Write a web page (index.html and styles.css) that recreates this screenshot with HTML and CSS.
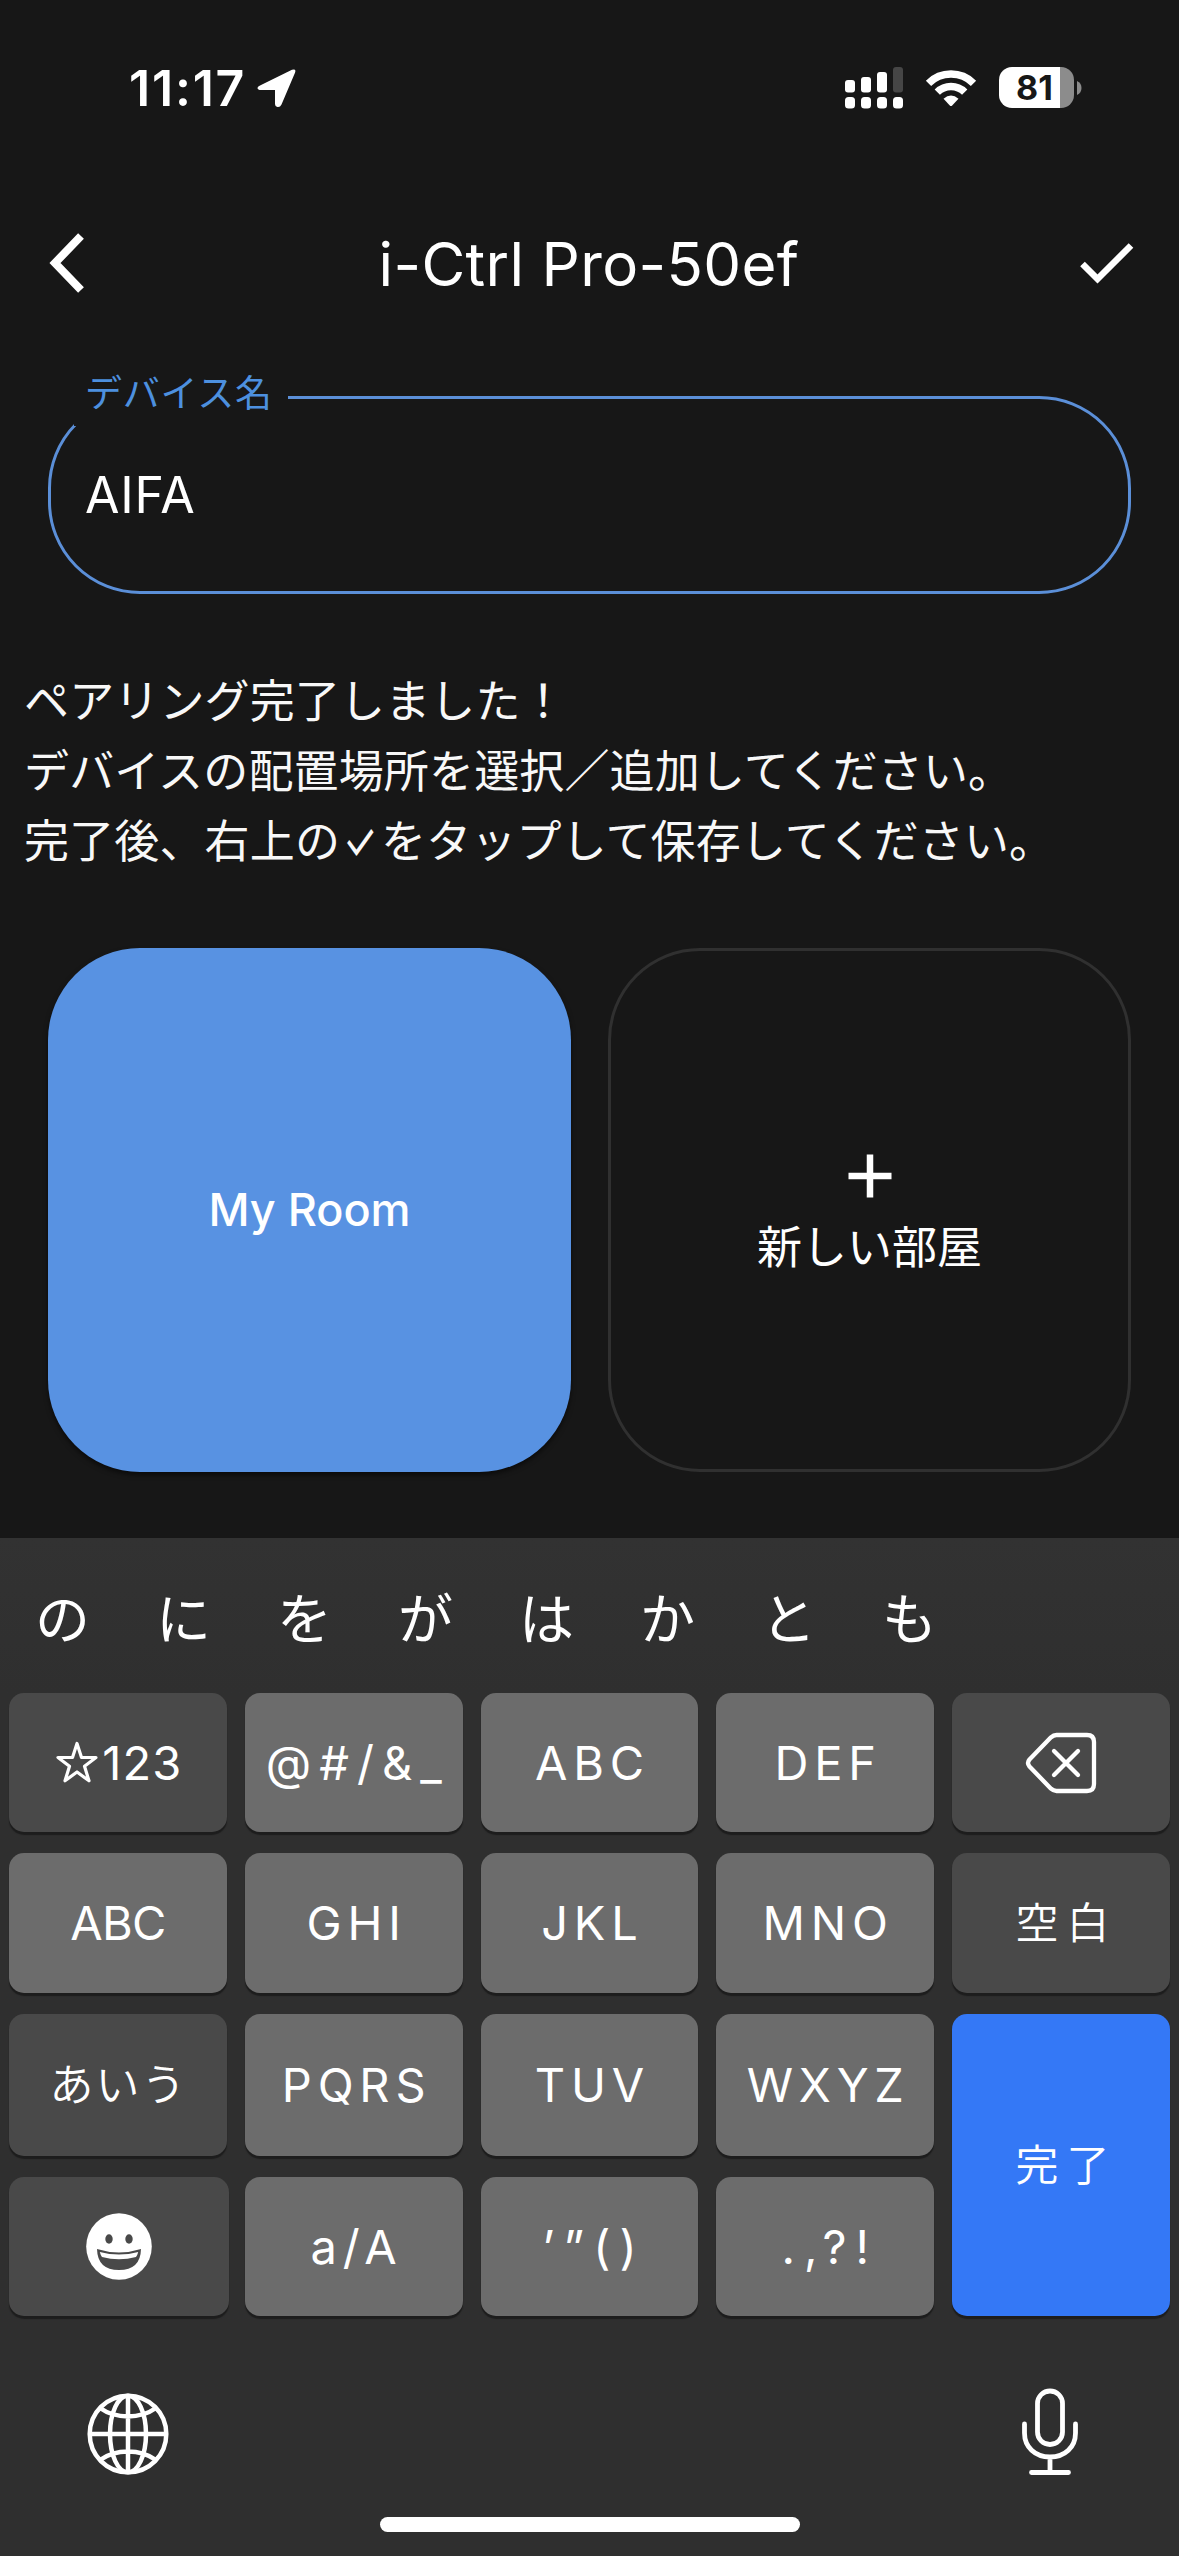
FILE: index.html
```html
<!DOCTYPE html>
<html lang="ja">
<head>
<meta charset="utf-8">
<title>i-Ctrl Pro-50ef</title>
<link rel="stylesheet" href="styles.css">
</head>
<body>
<div class="screen">
  <div class="status">
    <div class="status-left">
      <span class="time">11:17</span>
      <svg class="location" width="40" height="40" viewBox="0 0 40 40"><path d="M3 17.500 L35 1.800 Q39.500 .2 38 4.800 L24.500 36.500 Q23 39.500 20.500 39 Q18 38.500 18 35.500 V22 H4 Q.8 22 .5 20 Q.4 18.700 3 17.500Z" fill="#fff"/></svg>
    </div>
    <div class="status-right">
      <svg width="58" height="42" viewBox="0 0 58 42" fill="#fff">
        <rect x="0" y="13" width="10" height="12.500" rx="3"/><rect x="16" y="10" width="10" height="15.500" rx="3"/><rect x="32" y="5" width="10" height="20.500" rx="3"/><rect x="48" y="0" width="10" height="25.500" rx="3" fill="#464646"/>
        <rect x="0" y="30" width="10" height="11.500" rx="3.500"/><rect x="16" y="30" width="10" height="11.500" rx="3.500"/><rect x="32" y="30" width="10" height="11.500" rx="3.500"/><rect x="48" y="30" width="10" height="11.500" rx="3.500"/>
      </svg>
      <svg class="wifi" width="52" height="38" viewBox="0 0 52 38" fill="none" stroke="#fff" stroke-width="7.500">
        <path d="M3.500 14.300 A32 32 0 0 1 48.500 14.300"/><path d="M12.300 23.200 A19.500 19.500 0 0 1 39.700 23.200"/><path d="M18.500 29.700 Q26 23.400 33.500 29.700 L27.200 36.500 Q26 37.700 24.800 36.500Z" fill="#fff" stroke="none"/>
      </svg>
      <div class="battery"><div class="battery-body">81</div><svg width="5" height="14" viewBox="0 0 5 14"><path d="M0 0 Q4.500 2 4.500 7 Q4.500 12 0 14Z" fill="#8c8c8c"/></svg></div>
    </div>
  </div>

  <header class="header">
    <svg width="36" height="62" viewBox="0 0 36 62"><path d="M32 4 L6 31 L32 58" fill="none" stroke="#fff" stroke-width="8"/></svg>
    <h1 class="title">i-Ctrl Pro-50ef</h1>
    <svg width="54" height="42" viewBox="0 0 54 42"><path d="M2.500 22 L17.500 37 L51 3.500" fill="none" stroke="#fff" stroke-width="6.500"/></svg>
  </header>

  <main class="content">
    <div class="field">
      <span class="field-label">デバイス名</span>
      <span class="field-value">AIFA</span>
    </div>
    <p class="message">ペアリング完了しました！<br>デバイスの配置場所を選択／追加してください。<br>完了後、右上の<span class="tick">✓</span>をタップして保存してください。</p>
    <div class="rooms">
      <div class="room room-selected">My Room</div>
      <div class="room room-new">
        <svg width="44" height="44" viewBox="0 0 44 44"><path d="M22 .5 V43.500 M.5 22 H43.500" stroke="#fff" stroke-width="6.500"/></svg>
        <span>新しい部屋</span>
      </div>
    </div>
  </main>

  <section class="keyboard">
    <div class="candidates"><span>の</span><span>に</span><span>を</span><span>が</span><span>は</span><span>か</span><span>と</span><span>も</span></div>
    <div class="keys">
      <div class="key dark"><svg class="star" width="44" height="44" viewBox="0 0 44 44"><path d="M22 2.500 L26.500 16.500 H41 L29.500 25.300 L34 39.800 L22 31 L10 39.800 L14.500 25.300 L3 16.500 H17.500Z" fill="none" stroke="#fff" stroke-width="3.200" stroke-linejoin="round"/></svg><span class="digits">123</span></div>
      <div class="key"><span class="spaced symbols">@#/&amp;_</span></div>
      <div class="key"><span class="spaced">ABC</span></div>
      <div class="key"><span class="spaced">DEF</span></div>
      <div class="key dark"><svg class="delete" width="72" height="62" viewBox="0 0 72 62" fill="none" stroke="#fff" stroke-width="4.300" stroke-linecap="round" stroke-linejoin="round"><path d="M31.500 3 H62 Q69 3 69 10 V52 Q69 59 62 59 H31.500 Q28.500 59 26 56.700 L4.500 34.500 Q1.500 31 4.500 27.500 L26 5.300 Q28.500 3 31.500 3Z"/><path d="M29 19 L53 43 M53 19 L29 43"/></svg></div>

      <div class="key"><span class="plain">ABC</span></div>
      <div class="key"><span class="spaced">GHI</span></div>
      <div class="key"><span class="spaced">JKL</span></div>
      <div class="key"><span class="spaced">MNO</span></div>
      <div class="key dark"><span class="kanji">空白</span></div>

      <div class="key dark"><span class="kana">あいう</span></div>
      <div class="key"><span class="spaced">PQRS</span></div>
      <div class="key"><span class="spaced">TUV</span></div>
      <div class="key"><span class="spaced">WXYZ</span></div>
      <div class="key done"><span class="kanji">完了</span></div>

      <div class="key dark emoji"><svg width="66" height="67" viewBox="0 0 66 67"><ellipse cx="33" cy="33.500" rx="32.800" ry="33.300" fill="#fff"/><ellipse cx="23" cy="26" rx="3.700" ry="4.700" fill="#494949"/><ellipse cx="43" cy="26" rx="3.700" ry="4.700" fill="#494949"/><path d="M11 36 Q33 43 55 36 Q54.500 57 33 57 Q11.500 57 11 36Z" fill="#494949"/><path d="M13.800 39 Q33 44 52.200 39 Q51.500 42 50 44 Q33 48.500 16 44 Q14.500 42 13.800 39Z" fill="#fff"/></svg></div>
      <div class="key"><span class="spaced">a/A</span></div>
      <div class="key"><span class="spaced marks">’”()</span></div>
      <div class="key"><span class="spaced marks">.,?!</span></div>
    </div>
    <div class="bottom">
      <svg width="82" height="82" viewBox="0 0 82 82" fill="none" stroke="#fff" stroke-width="4.500"><circle cx="41" cy="41" r="38.300"/><ellipse cx="41" cy="41" rx="18" ry="38.300"/><path d="M41 2.500 V79.500 M2.500 41 H79.500 M13 15 Q25 23.500 41 23.500 Q57 23.500 69 15 M13 67 Q25 58.500 41 58.500 Q57 58.500 69 67"/></svg>
      <svg class="mic" width="58" height="88" viewBox="0 0 58 88" fill="none" stroke="#fff" stroke-width="4.800" stroke-linecap="round"><rect x="16.500" y="3" width="25" height="53.500" rx="12.500"/><path d="M3.500 36 V45 C3.500 59 14 69 29 69 C44 69 54.500 59 54.500 45 V36 M29 69 V84 M10.500 84.500 H47.500"/></svg>
    </div>
    <div class="home"></div>
  </section>
</div>
</body>
</html>
```
FILE: styles.css
```css
* { box-sizing: border-box; }
body { margin: 0; background: #171717; }
svg { display: block; flex: none; }

.screen {
  width: 1179px;
  height: 2556px;
  display: flex;
  flex-direction: column;
  overflow: hidden;
  background: #171717;
  color: #fff;
  font-family: Inter, "Noto Sans CJK JP", sans-serif;
}

.status {
  height: 175px;
  padding: 0 97px 0 129px;
  display: flex;
  justify-content: space-between;
  align-items: center;
}
.status-left, .status-right, .battery { display: flex; align-items: center; }
.status-left { gap: 11px; }
.time { font-size: 50px; font-weight: 600; line-height: 60px; letter-spacing: 1.8px; }
.status-right { gap: 22px; }
.battery { gap: 3px; }
.battery-body {
  width: 75px;
  height: 41px;
  padding-right: 4px;
  border-radius: 13px;
  background: linear-gradient(90deg, #fff 61px, #8c8c8c 61px);
  color: #171717;
  font-size: 34px;
  font-weight: 700;
  line-height: 41px;
  text-align: center;
}

.header {
  height: 176px;
  padding: 0 45px 0 49px;
  display: flex;
  align-items: center;
  justify-content: space-between;
}
.title { margin: 1px 0 0 13px; font-size: 60px; font-weight: 400; line-height: 72px; letter-spacing: 0.35px; white-space: nowrap; }

.content { height: 1187px; padding: 45px 0 0; }
.field {
  position: relative;
  margin: 0 48px;
  height: 198px;
  padding-left: 34px;
  border: 3px solid #5b8fd8;
  border-radius: 92px;
  display: flex;
  align-items: center;
}
.field-label {
  position: absolute;
  left: 23px;
  top: -33px;
  width: 214px;
  height: 60px;
  padding-left: 11px;
  background: #171717;
  color: #4d90df;
  font-size: 37px;
  line-height: 56px;
  letter-spacing: 0.8px;
  white-space: nowrap;
}
.field-value { font-size: 50px; line-height: 60px; letter-spacing: 0.8px; }
.message {
  margin: 73px 0 0 24px;
  color: #f8f8f8;
  font-size: 45px;
  line-height: 70px;
  letter-spacing: 0.15px;
  white-space: nowrap;
}
.tick {
  display: inline-block;
  width: 41px;
  line-height: 45px;
  transform: scale(0.85, 1.2);
}
.rooms { margin: 71px 48px 0; display: grid; grid-template-columns: 1fr 1fr; gap: 37px; }
.room {
  height: 524px;
  border-radius: 92px;
  display: flex;
  flex-direction: column;
  align-items: center;
  justify-content: center;
  font-size: 45px;
  line-height: 66px;
}
.room-selected { background: #5892e2; font-weight: 500; box-shadow: 0 3px 5px #0008; }
.room-new { border: 3px solid #303030; gap: 17px; padding-top: 14px; }

.keyboard { height: 1018px; background: #2f2f2f; }
.candidates {
  height: 155px;
  padding: 6px 0 0 2px;
  display: flex;
  align-items: center;
  background: linear-gradient(#323232, #2f2f2f);
}
.candidates span { width: 121px; font-size: 55px; line-height: 80px; text-align: center; }
.keys {
  padding: 0 9px;
  display: grid;
  grid-template-columns: repeat(5, 1fr);
  grid-template-rows: 139px 140px 142px 139px;
  gap: 21px 18px;
}
.key {
  display: flex;
  align-items: center;
  justify-content: center;
  border-radius: 15px;
  background: #6c6c6c;
  box-shadow: 0 3px 1px #1d1d1d;
  font-size: 47px;
  line-height: 60px;
  white-space: nowrap;
}
.dark { background: #494949; }
.done { grid-column: 5; grid-row: 3 / span 2; background: #3478f6; }
.emoji { margin-right: -2px; }
.star { margin-right: 3px; }
.digits { letter-spacing: 1.2px; margin-right: -2px; }
.plain { letter-spacing: -0.8px; }
.spaced { letter-spacing: 5.8px; margin-right: -5.8px; }
.symbols { letter-spacing: 8px; margin-right: -8px; }
.marks { letter-spacing: 9px; margin-right: -9px; }
.kanji { font-size: 43px; letter-spacing: 8px; margin-right: -11px; font-weight: 350; }
.kana { font-size: 44px; letter-spacing: 2px; margin-right: -1px; font-weight: 350; }

.bottom {
  height: 200px;
  padding: 77px 100px 0 87px;
  display: flex;
  justify-content: space-between;
  align-items: flex-start;
}
.mic { margin-top: -5px; }
.home { width: 420px; height: 15px; margin: 1px auto 0; border-radius: 8px; background: #fff; }
```
